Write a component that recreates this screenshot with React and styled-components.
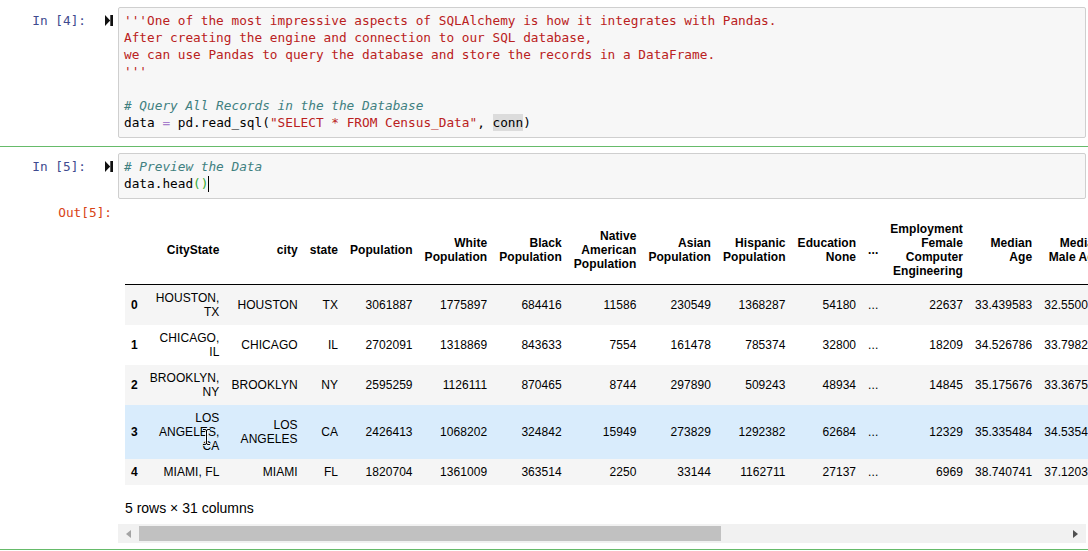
import React from "react";
import styled, { createGlobalStyle } from "styled-components";

const GlobalStyle = createGlobalStyle`
  html, body { margin: 0; padding: 0; background: #ffffff; overflow: hidden; }
  body { width: 1088px; height: 551px; }
`;

const MONO = `"DejaVu Sans Mono", "Liberation Mono", monospace`;
const SANS = `"Liberation Sans", Arial, sans-serif`;

const Notebook = styled.div`
  width: 1088px;
  display: flex;
  flex-direction: column;
`;

const Cell = styled.div`
  display: flex;
  flex-direction: column;
  padding: ${(p) => (p.$selected ? "6px 0 6px" : "7px 0 7px")};
  border-top: 1px solid ${(p) => (p.$selected ? "#66bb6a" : "transparent")};
  border-bottom: 1px solid ${(p) => (p.$selected ? "#66bb6a" : "transparent")};
  &:first-child { border-top: none; }
`;

const Row = styled.div`
  display: flex;
  align-items: flex-start;
  margin-top: ${(p) => p.$mt || 0}px;
`;

const Prompt = styled.div`
  flex: none;
  width: ${(p) => (p.$out ? "112px" : "113px")};
  padding-right: ${(p) => (p.$out ? "1px" : "0")};
  padding-top: ${(p) => (p.$out ? "0" : "5px")};
  display: flex;
  justify-content: flex-end;
  align-items: center;
  height: 17px;
  font-family: ${MONO};
  font-size: 12.75px;
  line-height: 17px;
  color: ${(p) => (p.$out ? "#d84315" : "#3f4b8f")};
  white-space: pre;
`;

const RunIcon = styled.svg`
  margin-left: 19px;
  width: 8px;
  height: 11px;
  flex: none;
`;

const InputArea = styled.div`
  flex: 1;
  margin-left: 5px;
  margin-right: 2px;
  background: #f7f7f7;
  border: 1px solid #cfcfcf;
  border-radius: 2px;
  padding: 4px 5px 6px;
  font-family: ${MONO};
  font-size: 12.75px;
  line-height: 17px;
  color: #000;
`;

const CodeLine = styled.div`
  height: 17px;
  white-space: pre;
  display: flex;
  align-items: center;
`;

const Tok = styled.span`
  white-space: pre;
  color: ${(p) =>
    ({ s: "#ba2121", c: "#408080", o: "#a77fcc", p: "#33aa33", n: "#000000", h: "#000000" }[p.$t])};
  font-style: ${(p) => (p.$t === "c" ? "italic" : "normal")};
  background: ${(p) => (p.$t === "h" ? "#dcdcdc" : "transparent")};
`;

const Caret = styled.span`
  display: inline-block;
  width: 1px;
  height: 16px;
  background: #000;
`;

const OutputArea = styled.div`
  flex: 1;
  min-width: 0;
  margin-left: 5px;
  display: flex;
  flex-direction: column;
`;

const ScrollContent = styled.div`
  overflow: hidden;
  padding-left: 7px;
`;

const DataTable = styled.table`
  width: 1px;
  margin-top: 12px;
  border-collapse: collapse;
  border-spacing: 0;
  font-family: ${SANS};
  font-size: 12px;
  letter-spacing: 0.06px;
  color: #000;

  th, td {
    padding: 6px;
    text-align: right;
    vertical-align: middle;
    white-space: normal;
    line-height: normal;
  }
  thead th {
    font-weight: bold;
    border-bottom: 1px solid #000;
  }
  tbody th { font-weight: bold; }
  tbody tr:nth-child(odd) { background: #f5f5f5; }
`;

const BodyRow = styled.tr`
  && { background: ${(p) => (p.$hover ? "#d9ecfc" : undefined)}; }
`;

const CursorCell = styled.td`
  position: relative;
`;

const IBeam = styled.svg`
  position: absolute;
  left: 58px;
  top: 23px;
  width: 9px;
  height: 18px;
  pointer-events: none;
`;

const Caption = styled.p`
  margin: 15px 0 0;
  padding-left: 7px;
  font-family: ${SANS};
  font-size: 14px;
  line-height: 16px;
  color: #000;
`;

const ScrollBar = styled.div`
  margin-top: 8px;
  margin-right: 2px;
  height: 19px;
  background: #f1f1f1;
  display: flex;
  align-items: center;
`;

const ArrowBtn = styled.div`
  flex: none;
  width: 21px;
  height: 19px;
  display: flex;
  align-items: center;
  justify-content: center;
`;

const Thumb = styled.div`
  flex: none;
  height: 15px;
  background: #c1c1c1;
`;

const Spacer = styled.div`
  flex: 1;
`;

const cell1 = [
  [["s", "'''One of the most impressive aspects of SQLAlchemy is how it integrates with Pandas."]],
  [["s", "After creating the engine and connection to our SQL database,"]],
  [["s", "we can use Pandas to query the database and store the records in a DataFrame."]],
  [["s", "'''"]],
  [],
  [["c", "# Query All Records in the the Database"]],
  [
    ["n", "data "],
    ["o", "="],
    ["n", " pd.read_sql("],
    ["s", '"SELECT * FROM Census_Data"'],
    ["n", ", "],
    ["h", "conn"],
    ["n", ")"],
  ],
];

const cell2 = [
  [["c", "# Preview the Data"]],
  [["n", "data.head"], ["p", "()"], ["caret", ""]],
];

const headers = [
  "",
  "CityState",
  "city",
  "state",
  "Population",
  "White Population",
  "Black Population",
  "Native American Population",
  "Asian Population",
  "Hispanic Population",
  "Education None",
  "...",
  "Employment Female Computer Engineering",
  "Median Age",
  "Median Male Age",
  "Median Female Age",
];

const rows = [
  ["0", "HOUSTON, TX", "HOUSTON", "TX", "3061887", "1775897", "684416", "11586", "230549", "1368287", "54180", "...", "22637", "33.439583", "32.550000", "34.274510"],
  ["1", "CHICAGO, IL", "CHICAGO", "IL", "2702091", "1318869", "843633", "7554", "161478", "785374", "32800", "...", "18209", "34.526786", "33.798246", "35.226316"],
  ["2", "BROOKLYN, NY", "BROOKLYN", "NY", "2595259", "1126111", "870465", "8744", "297890", "509243", "48934", "...", "14845", "35.175676", "33.367568", "36.863889"],
  ["3", "LOS ANGELES, CA", "LOS ANGELES", "CA", "2426413", "1068202", "324842", "15949", "273829", "1292382", "62684", "...", "12329", "35.335484", "34.535484", "36.164516"],
  ["4", "MIAMI, FL", "MIAMI", "FL", "1820704", "1361009", "363514", "2250", "33144", "1162711", "27137", "...", "6969", "38.740741", "37.120370", "40.148148"],
];

function Code({ lines }) {
  return (
    <InputArea>
      {lines.map((line, i) => (
        <CodeLine key={i}>
          {line.map(([t, text], j) =>
            t === "caret" ? <Caret key={j} /> : (
              <Tok key={j} $t={t}>
                {text}
              </Tok>
            )
          )}
        </CodeLine>
      ))}
    </InputArea>
  );
}

function Run() {
  return (
    <RunIcon viewBox="0 0 8 11">
      <path d="M0 0 L5.2 5.5 L0 11 Z" fill="#111" />
      <rect x="5.3" y="0" width="2.7" height="11" fill="#111" />
    </RunIcon>
  );
}

const beamPath =
  "M1 1.5 H3 Q4.5 1.5 4.5 3 V15 Q4.5 16.5 3 16.5 H1 M8 1.5 H6 Q4.5 1.5 4.5 3 M4.5 15 Q4.5 16.5 6 16.5 H8";

export default function App() {
  return (
    <>
      <GlobalStyle />
      <Notebook>
        <Cell>
          <Row>
            <Prompt>
              In [4]:
              <Run />
            </Prompt>
            <Code lines={cell1} />
          </Row>
        </Cell>
        <Cell $selected>
          <Row>
            <Prompt>
              In [5]:
              <Run />
            </Prompt>
            <Code lines={cell2} />
          </Row>
          <Row $mt={5}>
            <Prompt $out>Out[5]:</Prompt>
            <OutputArea>
              <ScrollContent>
                <DataTable>
                  <thead>
                    <tr>
                      {headers.map((h, i) => (
                        <th key={i}>{h}</th>
                      ))}
                    </tr>
                  </thead>
                  <tbody>
                    {rows.map((r, ri) => (
                      <BodyRow key={ri} $hover={ri === 3}>
                        {r.map((v, ci) =>
                          ci === 0 ? (
                            <th key={ci}>{v}</th>
                          ) : ri === 3 && ci === 1 ? (
                            <CursorCell key={ci}>
                              {v}
                              <IBeam viewBox="0 0 9 18">
                                <path d={beamPath} fill="none" stroke="#fff" strokeWidth="2.6" />
                                <path d={beamPath} fill="none" stroke="#000" strokeWidth="1" />
                              </IBeam>
                            </CursorCell>
                          ) : (
                            <td key={ci}>{v}</td>
                          )
                        )}
                      </BodyRow>
                    ))}
                  </tbody>
                </DataTable>
              </ScrollContent>
              <Caption>5 rows × 31 columns</Caption>
              <ScrollBar>
                <ArrowBtn>
                  <svg width="5" height="8" viewBox="0 0 5 8">
                    <path d="M5 0 L0 4 L5 8 Z" fill="#a3a3a3" />
                  </svg>
                </ArrowBtn>
                <Thumb style={{ width: 582 }} />
                <Spacer />
                <ArrowBtn>
                  <svg width="5" height="8" viewBox="0 0 5 8">
                    <path d="M0 0 L5 4 L0 8 Z" fill="#505050" />
                  </svg>
                </ArrowBtn>
              </ScrollBar>
            </OutputArea>
          </Row>
        </Cell>
      </Notebook>
    </>
  );
}
